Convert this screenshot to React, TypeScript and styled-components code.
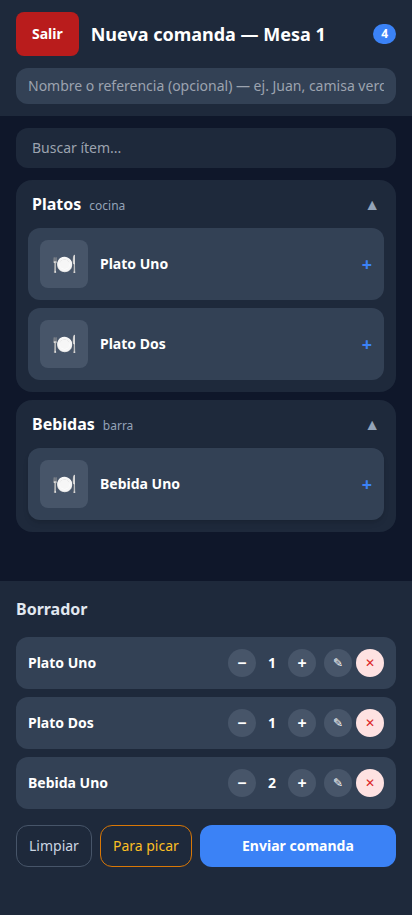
import React from "react";
import styled, { createGlobalStyle } from "styled-components";

const GlobalStyle = createGlobalStyle`
  *, *::before, *::after { box-sizing: border-box; }
  body { margin: 0; background: #0f172a; }
  button, input { font: inherit; margin: 0; }
  button { cursor: pointer; border: 0; padding: 0; }
`;

const Screen = styled.div`
  display: flex;
  flex-direction: column;
  height: 100vh;
  overflow: hidden;
  background: #0f172a;
  color: #fff;
  font-family: "Noto Sans", sans-serif;
  font-size: 16px;
  line-height: 24px;
`;

const Header = styled.header`
  flex: none;
  padding: 12px 16px;
  background: #1e293b;
`;

const TitleRow = styled.div`
  display: flex;
  align-items: center;
  gap: 12px;
  margin-bottom: 12px;
`;

const ExitButton = styled.button`
  height: 44px;
  padding: 0 16px;
  border-radius: 8px;
  background: #b91c1c;
  color: #fff;
  font-size: 14px;
  font-weight: 700;
  line-height: 20px;
`;

const Title = styled.h1`
  flex: 1;
  margin: 0;
  font-size: 18px;
  font-weight: 700;
  line-height: 28px;
`;

const CountBadge = styled.span`
  padding: 2px 8px;
  border-radius: 999px;
  background: #3b82f6;
  font-size: 12px;
  font-weight: 700;
  line-height: 16px;
`;

const TextField = styled.input<{ $search?: boolean }>`
  display: block;
  width: 100%;
  height: ${(p) => (p.$search ? 40 : 36)}px;
  padding: 0 ${(p) => (p.$search ? 16 : 12)}px 1px;
  border: 0;
  border-radius: 12px;
  outline: 0;
  background: ${(p) => (p.$search ? "#1e293b" : "#334155")};
  color: #fff;
  font-size: 14px;
  line-height: 20px;
  &::placeholder { color: #9ca3af; opacity: 1; }
`;

const Menu = styled.main`
  flex: 1;
  min-height: 0;
  display: flex;
  flex-direction: column;
  padding: 12px 16px;
  overflow: hidden;
`;

const Categories = styled.div`
  display: flex;
  flex-direction: column;
  gap: 8px;
  margin-top: 12px;
`;

const Category = styled.section`
  border-radius: 16px;
  background: #1e293b;
`;

const CategoryHeader = styled.div`
  display: flex;
  align-items: center;
  justify-content: space-between;
  height: 48px;
  padding: 0 16px;
`;

const CategoryName = styled.h2`
  margin: 0;
  padding-top: 1px;
  font-size: 16px;
  font-weight: 700;
  line-height: 25px;
`;

const Station = styled.span`
  margin-left: 8px;
  color: #94a3b8;
  font-size: 12px;
  font-weight: 400;
`;

const Arrow = styled.span`
  color: #94a3b8;
`;

const ItemList = styled.div`
  display: flex;
  flex-direction: column;
  gap: 8px;
  padding: 0 12px 12px;
`;

const ItemButton = styled.button<{ $raised?: boolean }>`
  display: flex;
  align-items: center;
  gap: 12px;
  width: 100%;
  padding: 12px;
  border-radius: 12px;
  background: #334155;
  color: #fff;
  text-align: left;
  box-shadow: ${(p) => (p.$raised ? "0 4px 6px -1px rgba(0,0,0,.1), 0 2px 4px -2px rgba(0,0,0,.1)" : "none")};
`;

const Thumb = styled.span`
  display: flex;
  align-items: center;
  justify-content: center;
  width: 48px;
  height: 48px;
  border-radius: 8px;
  background: #475569;
  font-size: 20px;
  line-height: 28px;
`;

const ItemName = styled.span`
  flex: 1;
  font-size: 14px;
  font-weight: 700;
  line-height: 20px;
`;

const Plus = styled.span`
  color: #3b82f6;
  font-size: 18px;
  font-weight: 700;
  line-height: 28px;
`;

const Draft = styled.section`
  flex: none;
  height: 334px;
  padding: 16px;
  background: #1e293b;
`;

const DraftTitle = styled.h2`
  margin: 0 0 16px;
  color: #e2e8f0;
  font-size: 16px;
  font-weight: 700;
  line-height: 24px;
`;

const DraftList = styled.div`
  display: flex;
  flex-direction: column;
  gap: 8px;
`;

const DraftRow = styled.div`
  display: flex;
  align-items: center;
  height: 52px;
  padding: 0 12px;
  border-radius: 12px;
  background: #334155;
`;

const Stepper = styled.div`
  display: flex;
  align-items: center;
  gap: 8px;
  margin-right: 8px;
`;

const Quantity = styled.span`
  width: 16px;
  text-align: center;
  font-size: 14px;
  font-weight: 700;
  line-height: 20px;
`;

const RowActions = styled.div`
  display: flex;
  gap: 4px;
`;

const RoundButton = styled.button<{ $kind?: "icon" | "danger" }>`
  display: flex;
  align-items: center;
  justify-content: center;
  width: 28px;
  height: 28px;
  border-radius: 50%;
  background: ${(p) => (p.$kind === "danger" ? "#fee2e2" : "#475569")};
  color: ${(p) => (p.$kind === "danger" ? "#dc2626" : "#fff")};
  font-size: ${(p) => (p.$kind ? 12 : 16)}px;
  font-weight: ${(p) => (p.$kind ? 400 : 700)};
  line-height: ${(p) => (p.$kind ? 16 : 24)}px;
`;

const Footer = styled.div`
  display: flex;
  gap: 8px;
  margin-top: 16px;
`;

const OutlineButton = styled.button<{ $amber?: boolean }>`
  height: 42px;
  padding: 0 12px;
  border: 1px solid ${(p) => (p.$amber ? "#d97706" : "#475569")};
  border-radius: 12px;
  background: transparent;
  color: ${(p) => (p.$amber ? "#fbbf24" : "#cbd5e1")};
  font-size: 14px;
  line-height: 20px;
`;

const SendButton = styled.button`
  flex: 1;
  height: 42px;
  border-radius: 12px;
  background: #3b82f6;
  color: #fff;
  font-size: 14px;
  font-weight: 700;
  line-height: 20px;
`;

const categories = [
  { name: "Platos", station: "cocina", items: ["Plato Uno", "Plato Dos"] },
  { name: "Bebidas", station: "barra", items: ["Bebida Uno"] },
];

const draft = [
  { name: "Plato Uno", quantity: 1 },
  { name: "Plato Dos", quantity: 1 },
  { name: "Bebida Uno", quantity: 2 },
];

export default function App() {
  return (
    <Screen>
      <GlobalStyle />
      <Header>
        <TitleRow>
          <ExitButton>Salir</ExitButton>
          <Title>Nueva comanda — Mesa 1</Title>
          <CountBadge>4</CountBadge>
        </TitleRow>
        <TextField placeholder="Nombre o referencia (opcional) — ej. Juan, camisa verde" />
      </Header>
      <Menu>
        <TextField $search placeholder="Buscar ítem..." />
        <Categories>
          {categories.map((category) => (
            <Category key={category.name}>
              <CategoryHeader>
                <CategoryName>
                  {category.name}
                  <Station>{category.station}</Station>
                </CategoryName>
                <Arrow>▲</Arrow>
              </CategoryHeader>
              <ItemList>
                {category.items.map((item) => (
                  <ItemButton key={item} $raised={item === "Bebida Uno"}>
                    <Thumb>🍽️</Thumb>
                    <ItemName>{item}</ItemName>
                    <Plus>+</Plus>
                  </ItemButton>
                ))}
              </ItemList>
            </Category>
          ))}
        </Categories>
      </Menu>
      <Draft>
        <DraftTitle>Borrador</DraftTitle>
        <DraftList>
          {draft.map((line) => (
            <DraftRow key={line.name}>
              <ItemName>{line.name}</ItemName>
              <Stepper>
                <RoundButton aria-label="Quitar uno">−</RoundButton>
                <Quantity>{line.quantity}</Quantity>
                <RoundButton aria-label="Agregar uno">+</RoundButton>
              </Stepper>
              <RowActions>
                <RoundButton $kind="icon" aria-label="Editar">✎</RoundButton>
                <RoundButton $kind="danger" aria-label="Eliminar">✕</RoundButton>
              </RowActions>
            </DraftRow>
          ))}
        </DraftList>
        <Footer>
          <OutlineButton>Limpiar</OutlineButton>
          <OutlineButton $amber>Para picar</OutlineButton>
          <SendButton>Enviar comanda</SendButton>
        </Footer>
      </Draft>
    </Screen>
  );
}
